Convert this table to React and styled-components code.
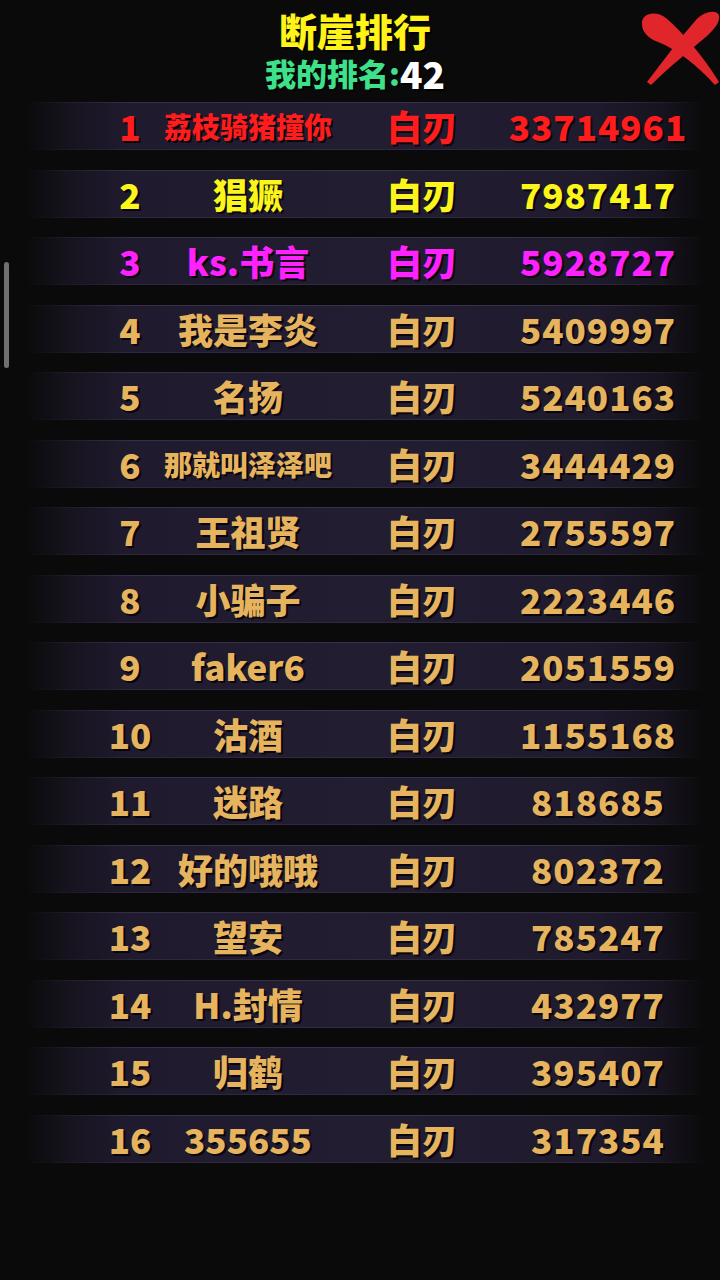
import React from "react";
import styled, { createGlobalStyle } from "styled-components";

const GlobalStyle = createGlobalStyle`
  html, body {
    margin: 0;
    padding: 0;
    background: #0a0a0a;
  }
  body {
    font-family: "Noto Sans CJK SC", "Noto Sans", sans-serif;
  }
`;

const Pantalla = styled.div`
  position: relative;
  width: 720px;
  height: 1280px;
  background: #0a0a0a;
  overflow: hidden;
`;

const Cabecera = styled.header`
  display: flex;
  flex-direction: column;
  align-items: center;
  padding: 8px 10px 0 0;
  height: 98px;
  box-sizing: border-box;
`;

const Titulo = styled.h1`
  margin: 0;
  font-size: 38px;
  line-height: 44px;
  font-weight: 900;
  color: #fff31a;
  text-shadow: 2px 2px 0 rgba(0, 0, 0, 0.7);
`;

const MiPuesto = styled.div`
  margin-top: 2px;
  display: flex;
  align-items: center;
  height: 38px;
  font-size: 31px;
  line-height: 38px;
  font-weight: 900;
  color: #3ee08a;
  text-shadow: 2px 2px 0 rgba(0, 0, 0, 0.7);
`;

const Numero = styled.span`
  display: inline-block;
  height: 38px;
  color: #ffffff;
  font-size: 37px;
  line-height: 38px;
`;

const Cerrar = styled.svg`
  position: absolute;
  top: 8px;
  right: 0;
  width: 80px;
  height: 80px;
`;

const Barra = styled.div`
  position: absolute;
  left: 4px;
  top: 262px;
  width: 5px;
  height: 106px;
  border-radius: 3px;
  background: #707070;
`;

const Lista = styled.ol`
  list-style: none;
  margin: 0;
  padding: 4px 0 0;
  display: flex;
  flex-direction: column;
  gap: 19.5px;
`;

const linea = (a) =>
  `linear-gradient(90deg, rgba(130,118,160,0) 0%, rgba(130,118,160,${a}) 15%, rgba(130,118,160,${a}) 88%, rgba(130,118,160,0) 100%)`;

const Fila = styled.li`
  margin-left: 26px;
  width: 678px;
  height: 48px;
  box-sizing: border-box;
  display: grid;
  grid-template-columns: 60px 176px 172px 180px;
  align-items: center;
  padding-left: 74px;
  background:
    ${linea(0.22)} top / 100% 1px no-repeat,
    ${linea(0.14)} bottom / 100% 1px no-repeat,
    linear-gradient(
      90deg,
      rgba(28, 23, 39, 0) 0%,
      rgba(30, 25, 43, 0.6) 6%,
      #201a2e 15%,
      #231d32 50%,
      #1f1a2c 84%,
      #17131f 94%,
      rgba(20, 17, 26, 0) 100%
    );
  color: ${(props) => props.color};
`;

const Celda = styled.span`
  justify-self: center;
  white-space: nowrap;
  font-weight: 900;
  font-size: ${(props) => props.size || 35}px;
  line-height: 46px;
  letter-spacing: ${(props) => props.spacing || 0}px;
  text-shadow: 2px 2px 0 rgba(0, 0, 0, 0.75);
`;

const ORO = "#e6b45e";

const jugadores = [
  { nombre: "荔枝骑猪撞你", puntos: "33714961", color: "#ff1c1c" },
  { nombre: "猖獗", puntos: "7987417", color: "#fbf51c" },
  { nombre: "ks.书言", puntos: "5928727", color: "#ff22ff" },
  { nombre: "我是李炎", puntos: "5409997" },
  { nombre: "名扬", puntos: "5240163" },
  { nombre: "那就叫泽泽吧", puntos: "3444429" },
  { nombre: "王祖贤", puntos: "2755597" },
  { nombre: "小骗子", puntos: "2223446" },
  { nombre: "faker6", puntos: "2051559" },
  { nombre: "沽酒", puntos: "1155168" },
  { nombre: "迷路", puntos: "818685" },
  { nombre: "好的哦哦", puntos: "802372" },
  { nombre: "望安", puntos: "785247" },
  { nombre: "H.封情", puntos: "432977" },
  { nombre: "归鹤", puntos: "395407" },
  { nombre: "355655", puntos: "317354" },
];

// nombres largos en chino van mas chicos
const tamNombre = (n) => (n.length >= 6 && /[\u4e00-\u9fff]/.test(n) ? 28 : 35);

export default function App() {
  return (
    <Pantalla>
      <GlobalStyle />
      <Cabecera>
        <Titulo>断崖排行</Titulo>
        <MiPuesto>
          我的排名:<Numero>42</Numero>
        </MiPuesto>
      </Cabecera>

      {/* boton cerrar */}
      <Cerrar viewBox="0 0 80 80">
        <path
          d="M2,16 C1,5 16,2 26,10 C42,24 62,46 79,74 L75,77 C58,58 38,42 18,34 C8,30 2,24 2,16 Z"
          fill="#e0262b"
        />
        <path
          d="M56,12 C64,3 78,1 79,8 C80,15 74,21 67,28 C48,44 28,60 11,77 L7,74 C24,52 40,30 56,12 Z"
          fill="#e0262b"
        />
      </Cerrar>

      <Barra />

      <Lista>
        {jugadores.map((j, i) => (
          <Fila key={i} color={j.color || ORO}>
            <Celda>{i + 1}</Celda>
            <Celda size={tamNombre(j.nombre)}>{j.nombre}</Celda>
            <Celda>白刃</Celda>
            <Celda spacing={1}>{j.puntos}</Celda>
          </Fila>
        ))}
      </Lista>
    </Pantalla>
  );
}
